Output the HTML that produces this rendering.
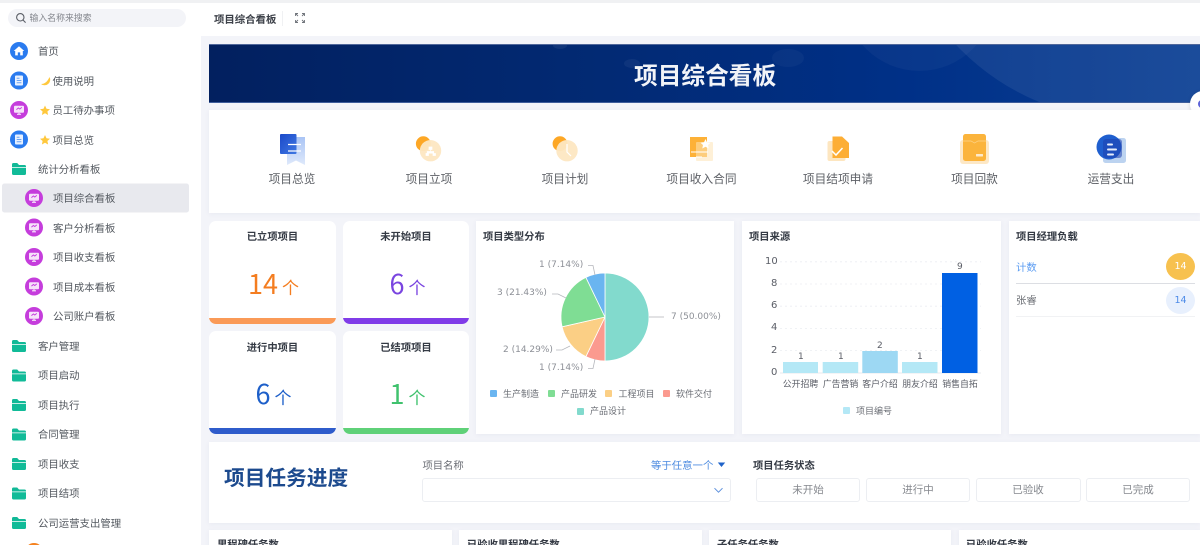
<!DOCTYPE html>
<html lang="zh"><head><meta charset="utf-8"><title>项目综合看板</title>
<style>
*{box-sizing:border-box}
html,body{margin:0;padding:0;width:1200px;height:545px;overflow:hidden}
body{position:relative;background:#f3f4f9;font-family:"Liberation Sans","Noto Sans CJK SC",sans-serif;color:#555}
div,span,svg{position:absolute}
#root{left:0;top:0;width:1200px;height:545px;overflow:hidden;background:#f3f4f9;filter:blur(.35px)}
.t{white-space:nowrap;line-height:16px;height:16px;font-family:"Noto Sans CJK SC",sans-serif}
.s{font-size:10.4px;color:#53585f}
.card{background:#fff;box-shadow:0 1px 5px rgba(60,70,120,.06)}
.h{font-size:10.3px;font-weight:700;color:#343a44}
.stat{background:#fff;border-radius:7px;overflow:hidden;width:127px}
.bar{left:0;right:0;bottom:0;height:6px}
.nl{font-size:11.7px;color:#5d6066;text-align:center;width:120px}
.num{font-size:27px;line-height:36px;height:36px;white-space:nowrap;font-family:"Noto Sans CJK SC",sans-serif;text-align:center;width:127px;left:1px}
.num b{font-weight:400;font-size:17px;margin-left:4px}
.lab{font:9px/12px "DejaVu Sans",sans-serif;color:#8d9097;white-space:nowrap}
.ax{font:10px/12px "DejaVu Sans",sans-serif;color:#5a5d66;white-space:nowrap}
.xl{font-size:8.9px;color:#5a5d66;width:40px;text-align:center;white-space:nowrap;line-height:12px;font-family:"Noto Sans CJK SC",sans-serif}
.lg{font-size:9px;color:#6a6d74;white-space:nowrap;line-height:12px;font-family:"Noto Sans CJK SC",sans-serif}
.sq{width:7px;height:7px;border-radius:1px}
.btn{top:478px;height:24px;background:#fff;border:1px solid #eceef2;border-radius:3px;text-align:center;font-size:10.5px;line-height:22px;color:#85888e;font-family:"Noto Sans CJK SC",sans-serif}
</style></head><body>
<div id="root">

<!-- sidebar -->
<div style="left:0;top:0;width:201px;height:545px;background:#fff"></div>
<div style="left:0;top:0;width:1200px;height:3px;background:#f0f1f3"></div>
<div style="left:8px;top:9px;width:178px;height:18px;background:#f3f4f8;border-radius:9px"></div>
<svg style="left:15px;top:12px" width="12" height="12" viewBox="0 0 12 12" fill="none" stroke="#5c6068" stroke-width="1.1"><circle cx="5.3" cy="5.3" r="3.7"/><path d="M8 8l2.6 2.6"/></svg>
<div class="t" style="left:29.5px;top:10px;font-size:8.9px;color:#83868d">输入名称来搜索</div>

<svg style="left:0;top:0" width="201" height="545" viewBox="0 0 201 545">
<defs>
<g id="home"><circle r="9" fill="#2a7bef"/><path d="M-5.3 0L0-4.8 5.3 0H3.8V4.4H1.2V1.4H-1.2V4.4H-3.8V0Z" fill="#fff"/></g>
<g id="doc"><circle r="9" fill="#2a7bef"/><rect x="-4" y="-5" width="8" height="10" rx="1" fill="#e8f1ff"/><path d="M-2.3-2.2H.5M-2.3 0H2.4M-2.3 2.2H2.4" stroke="#6aa2f3" stroke-width="1"/></g>
<g id="scr"><circle r="9" fill="#c53ddc"/><rect x="-5" y="-4.3" width="10" height="7" rx="1" fill="#f6e3fa"/><path d="M-2 4.3H2M0 2.7V4.3" stroke="#f6e3fa" stroke-width="1.2"/><path d="M-2.6-.4L-.6-2 .8-1 2.8-2.6" stroke="#c53ddc" stroke-width=".9" fill="none"/></g>
<g id="fold"><path d="M0 1.6Q0 0 1.5 0H5.2L7 2H12.5Q14 2 14 3.5V4H0Z" fill="#11b997"/><path d="M0 4.8H14V10.5Q14 12 12.5 12H1.5Q0 12 0 10.5Z" fill="#11bb98"/></g>
<path id="star" d="M0-5L1.5-1.7 5-1.3 2.4 1 3.1 4.5 0 2.8-3.1 4.5-2.4 1-5-1.3-1.5-1.7Z" fill="#ffc83d"/>
</defs>
<use href="#home" x="19" y="51"/>
<use href="#doc" x="19" y="80.500"/>
<use href="#scr" x="19" y="110"/>
<use href="#doc" x="19" y="139.500"/>
<use href="#fold" x="12" y="163"/>
<rect x="2" y="183.500" width="187" height="29" rx="2.500" fill="#e8e9ee"/>
<use href="#scr" x="34" y="198"/>
<use href="#scr" x="34" y="227.500"/>
<use href="#scr" x="34" y="257"/>
<use href="#scr" x="34" y="286.500"/>
<use href="#scr" x="34" y="316"/>
<use href="#fold" x="12" y="340"/>
<use href="#fold" x="12" y="369.500"/>
<use href="#fold" x="12" y="399"/>
<use href="#fold" x="12" y="428.500"/>
<use href="#fold" x="12" y="458"/>
<use href="#fold" x="12" y="487.500"/>
<use href="#fold" x="12" y="517"/>
<path d="M49.500 77A5.600 5.600 0 0 1 41 84Q46.500 84 49.500 77Z" fill="#ffc83d"/>
<use href="#star" x="45" y="110.500"/>
<use href="#star" x="45" y="140"/>
<circle cx="34" cy="552" r="9" fill="#f5821f"/>
</svg>

<div class="t s" style="left:38px;top:43px">首页</div>
<div class="t s" style="left:52.500px;top:73px">使用说明</div>
<div class="t s" style="left:52.500px;top:102px">员工待办事项</div>
<div class="t s" style="left:52.500px;top:132px">项目总览</div>
<div class="t s" style="left:38px;top:161px">统计分析看板</div>
<div class="t s" style="left:53px;top:190px">项目综合看板</div>
<div class="t s" style="left:53px;top:220px">客户分析看板</div>
<div class="t s" style="left:53px;top:249px">项目收支看板</div>
<div class="t s" style="left:53px;top:279px">项目成本看板</div>
<div class="t s" style="left:53px;top:308px">公司账户看板</div>
<div class="t s" style="left:38px;top:338px">客户管理</div>
<div class="t s" style="left:38px;top:367px">项目启动</div>
<div class="t s" style="left:38px;top:397px">项目执行</div>
<div class="t s" style="left:38px;top:426px">合同管理</div>
<div class="t s" style="left:38px;top:456px">项目收支</div>
<div class="t s" style="left:38px;top:485px">项目结项</div>
<div class="t s" style="left:38px;top:515px">公司运营支出管理</div>

<!-- header -->
<div style="left:201px;top:3px;width:999px;height:33px;background:#fff"></div>
<div class="t" style="left:214px;top:11px;font-size:10.400px;font-weight:700;color:#3c4048">项目综合看板</div>
<div style="left:282px;top:11px;width:1px;height:15px;background:#f0f1f3"></div>
<svg style="left:295px;top:13px" width="10" height="10" viewBox="0 0 10 10" fill="none" stroke="#70747b" stroke-width=".9"><path d="M.5 3V.5H3M7 .5H9.500V3M9.500 7V9.500H7M3 9.500H.5V7M1 1L3 3M9 1L7 3M9 9L7 7M1 9L3 7"/></svg>

<!-- banner -->
<div style="left:209px;top:43.500px;width:991px;height:59.500px;overflow:hidden;background:linear-gradient(90deg,#02205f 0%,#022a74 40%,#003087 70%,#0a3f94 100%);border-top:1px solid #51689b;border-bottom:1px solid #3f5e9c">
<div style="left:635px;top:-125px;width:151px;height:151px;border-radius:50%;background:rgba(255,255,255,.035)"></div>
<div style="left:682px;top:-403px;width:478px;height:478px;border-radius:50%;background:rgba(255,255,255,.07)"></div>
<div style="left:563px;top:4px;width:32px;height:18px;border-radius:50%;background:rgba(255,255,255,.035)"></div>
<div style="left:415px;top:14px;width:16px;height:9px;border-radius:50%;background:rgba(255,255,255,.05)"></div>
<div style="left:344px;top:-3px;width:14px;height:7px;border-radius:50%;background:rgba(255,255,255,.06)"></div>
</div>
<div class="t" style="left:634px;top:58px;height:32px;line-height:32px;font-size:23.700px;font-weight:700;color:#f2f4f8">项目综合看板</div>
<div style="left:1190px;top:91px;width:26px;height:26px;border-radius:50%;background:#fff;box-shadow:0 1px 4px rgba(0,0,0,.12)"></div>
<div style="left:1198px;top:100px;width:8px;height:8px;border-radius:50%;background:#5d63d8"></div>

<!-- nav card -->
<div class="card" style="left:209px;top:110px;width:991px;height:103px"></div>
<svg style="left:209px;top:110px" width="991" height="70" viewBox="209 110 991 70">
<defs>
<linearGradient id="b1" x1="0" y1="0" x2="1" y2="1"><stop offset="0" stop-color="#1b49c9"/><stop offset="1" stop-color="#3f78e2"/></linearGradient>
<linearGradient id="b2" x1="0" y1="0" x2="0" y2="1"><stop offset="0" stop-color="#a9c4f5"/><stop offset="1" stop-color="#dfe9fb"/></linearGradient>
</defs>
<!-- 项目总览 -->
<path d="M287 137H305V165L296 160.500L287 165Z" fill="url(#b2)"/>
<rect x="280" y="134" width="16.500" height="20" rx="1" fill="url(#b1)"/>
<path d="M288 144.500H301M288 151H301" stroke="#fff" stroke-width="1.300"/>
<!-- 项目立项 -->
<circle cx="423.300" cy="143.700" r="7.400" fill="#fda725"/>
<circle cx="430.500" cy="150.700" r="10.700" fill="#fde7c2" opacity=".95"/>
<path d="M429 147h3v2.500h-3zM426 153.500h2.500v2h-2.500zM433 153.500h2.500v2H433zM430.500 149.500v2M427.200 153.500v-2h6.500v2" fill="#fff" stroke="#fff" stroke-width=".7"/>
<!-- 项目计划 -->
<circle cx="560" cy="143.700" r="7.400" fill="#fda725"/>
<circle cx="567" cy="150.700" r="10.700" fill="#fde7c2" opacity=".95"/>
<path d="M567 144V152L571 156" fill="none" stroke="#fff" stroke-width="1.200"/>
<!-- 收入合同 -->
<path d="M690 137H707V157H690Z" fill="#fdb137"/>
<rect x="696" y="142" width="17" height="19" rx="1" fill="#fde3b6" opacity=".55"/>
<path d="M705.500 139L707 142.200 710.500 142.700 708 145 708.700 148.500 705.500 146.800 702.300 148.500 703 145 700.500 142.700 704 142.200Z" fill="#fff"/>
<path d="M691 152H708M696 157H702" stroke="#fff" stroke-width="1"/>
<!-- 结项申请 -->
<rect x="827.500" y="141" width="18" height="20" rx="2" fill="#fde6c0"/>
<path d="M832.500 136.500H842L849 143V158H832.500Z" fill="#fdae35"/>
<path d="M832 151L836 155L842.500 148" fill="none" stroke="#fff" stroke-width="1.500"/>
<!-- 回款 -->
<rect x="960" y="140" width="29" height="24" rx="3" fill="#fde8c6"/>
<rect x="963" y="134" width="23" height="27" rx="2.500" fill="#fbb43c"/>
<path d="M963 141H971L974.500 143 978 141H986" fill="none" stroke="#fdd48b" stroke-width=".7"/>
<rect x="976" y="154" width="7" height="2.500" rx=".5" fill="#fdeacb"/>
<!-- 运营支出 -->
<rect x="1103" y="138" width="23" height="25" rx="2.500" fill="#bcd3f0"/>
<circle cx="1109" cy="147" r="12.500" fill="#1f5fcf"/>
<rect x="1103" y="139" width="19" height="19" rx="3" fill="#1d3fae" opacity=".55"/>
<path d="M1108 144.500H1112M1108 149.500H1116M1108 154.500H1113" stroke="#e4ecfa" stroke-width="2" stroke-linecap="round"/>
</svg>
<div class="t nl" style="left:232px;top:171px">项目总览</div>
<div class="t nl" style="left:369px;top:171px">项目立项</div>
<div class="t nl" style="left:505px;top:171px">项目计划</div>
<div class="t nl" style="left:641.500px;top:171px">项目收入合同</div>
<div class="t nl" style="left:778px;top:171px">项目结项申请</div>
<div class="t nl" style="left:914.500px;top:171px">项目回款</div>
<div class="t nl" style="left:1051px;top:171px">运营支出</div>

<!-- stats -->
<div class="stat" style="left:209px;top:221px;height:103px"><div class="t h" style="left:0;width:127px;text-align:center;top:7px">已立项项目</div><div class="num" style="top:44px;color:#f47d20">14<b>个</b></div><div class="bar" style="background:#fa9a57"></div></div>
<div class="stat" style="left:343px;top:221px;height:103px;width:126px"><div class="t h" style="left:0;width:126px;text-align:center;top:7px">未开始项目</div><div class="num" style="top:44px;color:#7a45e0">6<b>个</b></div><div class="bar" style="background:#803ce8"></div></div>
<div class="stat" style="left:209px;top:331px;height:103px"><div class="t h" style="left:0;width:127px;text-align:center;top:8px">进行中项目</div><div class="num" style="top:44px;color:#1d5fc9">6<b>个</b></div><div class="bar" style="background:#2f5ccb"></div></div>
<div class="stat" style="left:343px;top:331px;height:103px;width:126px"><div class="t h" style="left:0;width:126px;text-align:center;top:8px">已结项项目</div><div class="num" style="top:44px;color:#40c26e">1<b>个</b></div><div class="bar" style="background:#5fd178"></div></div>

<!-- pie -->
<div class="card" style="left:476px;top:221px;width:258px;height:213px"></div>
<div class="t h" style="left:483px;top:228px">项目类型分布</div>
<svg style="left:476px;top:221px" width="258" height="170" viewBox="476 221 258 170">
<path d="M605 317V273A44 44 0 0 1 605 361Z" fill="#82dacd" stroke="#fff" stroke-width=".8"/>
<path d="M605 317V361A44 44 0 0 1 585.900 356.600Z" fill="#fb9a8f" stroke="#fff" stroke-width=".8"/>
<path d="M605 317L585.900 356.600A44 44 0 0 1 562.100 326.800Z" fill="#fbcf85" stroke="#fff" stroke-width=".8"/>
<path d="M605 317L562.100 326.800A44 44 0 0 1 585.900 277.400Z" fill="#7fdd94" stroke="#fff" stroke-width=".8"/>
<path d="M605 317L585.900 277.400A44 44 0 0 1 605 273Z" fill="#6ab5f0" stroke="#fff" stroke-width=".8"/>
<g fill="none" stroke="#b5b7bd" stroke-width=".8">
<path d="M649 317H664"/>
<path d="M595 275L593 265.500H588"/>
<path d="M566 298L558 294H552"/>
<path d="M570 346L562 350H556"/>
<path d="M595 359L593 368.500H588"/>
</g>
</svg>
<div class="lab" style="left:671px;top:311px">7 (50.00%)</div>
<div class="lab" style="left:539px;top:259px">1 (7.14%)</div>
<div class="lab" style="left:497px;top:287px">3 (21.43%)</div>
<div class="lab" style="left:503px;top:344px">2 (14.29%)</div>
<div class="lab" style="left:539px;top:362px">1 (7.14%)</div>
<div class="sq" style="left:490px;top:390px;background:#6ab5f0"></div><div class="lg" style="left:503px;top:387.500px">生产制造</div>
<div class="sq" style="left:547.500px;top:390px;background:#7fdd94"></div><div class="lg" style="left:561px;top:387.500px">产品研发</div>
<div class="sq" style="left:605px;top:390px;background:#fbcf85"></div><div class="lg" style="left:618.500px;top:387.500px">工程项目</div>
<div class="sq" style="left:662.500px;top:390px;background:#fb9a8f"></div><div class="lg" style="left:676px;top:387.500px">软件交付</div>
<div class="sq" style="left:576.500px;top:408px;background:#82dacd"></div><div class="lg" style="left:590px;top:405px">产品设计</div>

<!-- bar chart -->
<div class="card" style="left:742px;top:221px;width:259px;height:213px"></div>
<div class="t h" style="left:749px;top:228px">项目来源</div>
<svg style="left:742px;top:221px" width="259" height="170" viewBox="742 221 259 170">
<g stroke="#eceef2" stroke-width=".8" stroke-dasharray="2 3"><path d="M780 261.800H981M780 284H981M780 306.200H981M780 328.400H981M780 350.600H981"/></g>
<path d="M780 373H981" stroke="#dfe1e6" stroke-width=".8"/>
<rect x="783" y="362" width="35" height="11" fill="#b4e8f6"/>
<rect x="822.700" y="362" width="35.500" height="11" fill="#b4e8f6"/>
<rect x="862.300" y="351" width="35.500" height="22" fill="#9dd8f3"/>
<rect x="902" y="362" width="35.500" height="11" fill="#b4e8f6"/>
<rect x="942" y="273" width="35.500" height="100" fill="#0060e3"/>
</svg>
<div class="ax" style="left:765px;top:255.500px">10</div>
<div class="ax" style="left:771px;top:278px">8</div>
<div class="ax" style="left:771px;top:300px">6</div>
<div class="ax" style="left:771px;top:322px">4</div>
<div class="ax" style="left:771px;top:344.500px">2</div>
<div class="ax" style="left:771px;top:367px">0</div>
<div class="ax" style="left:798px;top:351px;font-size:9px">1</div>
<div class="ax" style="left:838px;top:351px;font-size:9px">1</div>
<div class="ax" style="left:877px;top:339.500px;font-size:9px">2</div>
<div class="ax" style="left:917px;top:351px;font-size:9px">1</div>
<div class="ax" style="left:957px;top:261px;font-size:9px">9</div>
<div class="xl" style="left:780.500px;top:378px">公开招聘</div>
<div class="xl" style="left:820.500px;top:378px">广告营销</div>
<div class="xl" style="left:860px;top:378px">客户介绍</div>
<div class="xl" style="left:900px;top:378px">朋友介绍</div>
<div class="xl" style="left:940px;top:378px">销售自拓</div>
<div class="sq" style="left:842.500px;top:407px;background:#b4e8f6"></div><div class="lg" style="left:856px;top:405px">项目编号</div>

<!-- manager -->
<div class="card" style="left:1009px;top:221px;width:191px;height:213px"></div>
<div class="t h" style="left:1016px;top:228px">项目经理负载</div>
<div class="t" style="left:1016px;top:259px;font-size:10.400px;color:#5b9cf2">计数</div>
<div style="left:1166px;top:253px;width:29px;height:27px;border-radius:50%;background:#f7c14f;color:#fff;font-size:9.500px;line-height:27px;text-align:center;font-family:'DejaVu Sans',sans-serif">14</div>
<div style="left:1016px;top:283px;width:179px;height:1px;background:#dcdee3"></div>
<div class="t" style="left:1016px;top:292px;font-size:10.400px;color:#6c6f75">张睿</div>
<div style="left:1166px;top:287px;width:29px;height:27px;border-radius:50%;background:#e8f0fd;color:#4d8be8;font-size:9.500px;line-height:27px;text-align:center;font-family:'DejaVu Sans',sans-serif">14</div>
<div style="left:1016px;top:316px;width:179px;height:1px;background:#f1f2f4"></div>

<!-- task filter -->
<div class="card" style="left:209px;top:442px;width:991px;height:81px"></div>
<div class="t" style="left:224px;top:461px;height:30px;line-height:30px;font-size:20.700px;font-weight:700;color:#1c4a8e">项目任务进度</div>
<div class="t" style="left:422.500px;top:457px;font-size:10.300px;color:#6b6e75">项目名称</div>
<div class="t" style="left:651px;top:457px;font-size:10.400px;color:#4d8be0">等于任意一个</div>
<svg style="left:717px;top:462px" width="9" height="6" viewBox="0 0 9 6"><path d="M.8.500H8.200L4.500 5Z" fill="#1f63c9"/></svg>
<div style="left:422px;top:478px;width:309px;height:24px;border:1px solid #eceef2;border-radius:3px;background:#fff"></div>
<svg style="left:713px;top:487px" width="11" height="7" viewBox="0 0 11 7" fill="none" stroke="#5b8fdc" stroke-width="1"><path d="M1.500 1.200L5.500 5.200 9.500 1.200"/></svg>
<div class="t h" style="left:753px;top:457px">项目任务状态</div>
<div class="btn" style="left:756px;width:104px">未开始</div>
<div class="btn" style="left:866px;width:104px">进行中</div>
<div class="btn" style="left:975.500px;width:105px">已验收</div>
<div class="btn" style="left:1086px;width:104px">已完成</div>

<!-- bottom cards -->
<div class="card" style="left:209px;top:530px;width:243px;height:30px"></div>
<div class="card" style="left:459px;top:530px;width:243px;height:30px"></div>
<div class="card" style="left:709px;top:530px;width:242px;height:30px"></div>
<div class="card" style="left:959px;top:530px;width:241px;height:30px"></div>
<div class="t h" style="left:217px;top:536px">里程碑任务数</div>
<div class="t h" style="left:467px;top:536px">已验收里程碑任务数</div>
<div class="t h" style="left:717px;top:536px">子任务任务数</div>
<div class="t h" style="left:966px;top:536px">已验收任务数</div>
</div>
</body></html>
